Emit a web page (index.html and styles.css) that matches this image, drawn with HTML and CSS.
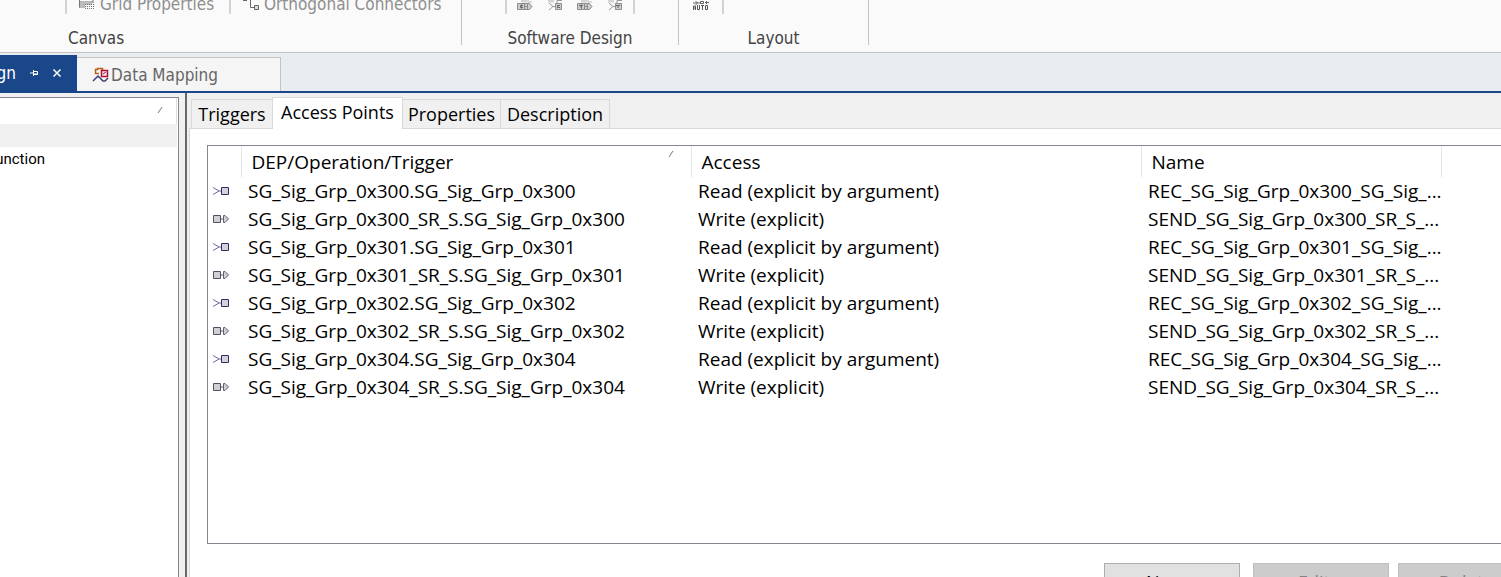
FILE: index.html
```html
<!DOCTYPE html>
<html lang="en">
<head>
<meta charset="utf-8">
<title>Data Mapping</title>
<link rel="stylesheet" href="styles.css">
</head>
<body>
<svg class="defs" aria-hidden="true">
  <symbol id="read" viewBox="0 0 18 12"><path d="M0 2.500 6 6 0 9.500M6 6h2" fill="none" stroke="#6c6c9c"/><path d="M8.500 2.500h7v7h-7z" fill="#d2d2d8" stroke="#303068"/></symbol>
  <symbol id="write" viewBox="0 0 18 12"><path d="M.5 2.500h7v7h-7z" fill="#d0d0d4" stroke="#505064"/><path d="M8 6h2M10.500 2.500v7h1.500L15.500 6 12 2.500z" fill="#d0d0d4" stroke="#606074"/></symbol>
  <symbol id="send" viewBox="0 0 16 12"><path d="M4 1h6" stroke="#d4d4d4" stroke-width="3"/><path d="M11 0v2h4" fill="none" stroke="#bbb"/><path d="M4.500 3.500h6v6h-6zM.5 3.500h7v6h-7zM8 6.500h2M10.500 3.500v6h2l2.500-3-2.500-3z" fill="#ccc" stroke="#8d8d8d"/></symbol>
  <symbol id="receive" viewBox="0 0 16 12"><path d="M1 1h6" stroke="#d4d4d4" stroke-width="3"/><path d="M10 3V.5h5M2 3l4 3.500-4 3.500M6 6.500h2" fill="none" stroke="#999"/><path d="M8.500 3.500h6v6h-6z" fill="#ccc" stroke="#8d8d8d"/></symbol>
  <symbol id="c" viewBox="0 0 16 12"><path d="M6 5.500H3.500v2H6" fill="none" stroke="#666"/></symbol>
  <symbol id="t" viewBox="0 0 16 12"><path d="M2 5.500h4M4 5v3" fill="none" stroke="#666"/></symbol>
</svg>
<header class="ribbon">
  <section class="group canvas">
    <div class="tools">
      <i class="bar"></i>
      <button class="tool grid-tool" disabled><svg width="16" height="12"><path d="M.5 0v7.500H6M0 2h14M14 0v3" fill="#ccc" stroke="#777"/><path d="M1 2h12v3H6v3H1z" fill="#bbb"/><path d="M6 4.500h10M6 6.500h10M6 8.500h10" stroke="#777" stroke-dasharray="1 1"/></svg>Grid Properties</button>
      <i class="bar"></i>
      <button class="tool ortho-tool" disabled><svg width="16" height="12"><path d="M0 .5h4M7.500 0v7.500H12" fill="none" stroke="#666"/><path d="M11.500 5.500h4v4h-4z" fill="#ddd" stroke="#666"/></svg>Orthogonal Connectors</button>
    </div>
    <h2>Canvas</h2>
  </section>
  <section class="group design">
    <div class="tools">
      <i class="bar"></i>
      <button class="tool" aria-label="Send client" disabled><svg width="16" height="12"><use href="#send" width="16" height="12"/><use href="#c" width="16" height="12"/></svg></button>
      <button class="tool" aria-label="Receive client" disabled><svg width="16" height="12"><use href="#receive" width="16" height="12"/><use href="#c" x="7" width="16" height="12"/></svg></button>
      <button class="tool" aria-label="Send trigger" disabled><svg width="16" height="12"><use href="#send" width="16" height="12"/><use href="#t" width="16" height="12"/></svg></button>
      <button class="tool" aria-label="Receive trigger" disabled><svg width="16" height="12"><use href="#receive" width="16" height="12"/><use href="#t" x="7" width="16" height="12"/></svg></button>
      <i class="bar"></i>
    </div>
    <h2>Software Design</h2>
  </section>
  <section class="group layout">
    <div class="tools">
      <button class="tool" aria-label="Auto layout"><svg width="18" height="12"><path d="M1 3h2M3 2h2v2H3M5 3h3M8.500 1.500h3v2h-3zM14.500 1v3M13 2.500h4" fill="none" stroke="#666"/><path d="M1.500 10V6h2v4M1 8h3M5.500 5v4.500h2V5M9 5.500h3M10.500 5v5M13.500 5.500h2v4h-2z" fill="none" stroke="#555"/></svg></button>
      <i class="bar"></i>
    </div>
    <h2>Layout</h2>
  </section>
</header>
<nav class="docs">
  <div class="doc active"><span>gn</span>
    <button aria-label="Pin"><svg width="10" height="10"><path d="M1 5h3M4.500 2v6M4 3.500h4.500v3H4M4 6h5" fill="none" stroke="#fff"/></svg></button>
    <button aria-label="Close"><svg width="10" height="10"><path d="m1.500 1.500 7 7m0-7-7 7" stroke="#fff" stroke-width="1.500"/></svg></button>
  </div>
  <button class="doc mapping"><svg width="17" height="16"><path d="M3.500 7V2.500h2V1.500h5v2M3 6.500h4" fill="none" stroke="#b86414" stroke-width="1.500"/><path d="M9.500 3.500h6v6h-6z" fill="#f4e8ec" stroke="#b01038" stroke-width="1.500"/><path d="M11 7l3-2" stroke="#b01038"/><path d="M1 14l5-5 5 5h2l3-3" fill="none" stroke="#3b3f73" stroke-width="1.500"/></svg>Data Mapping</button>
</nav>
<main class="work">
  <aside class="tree">
    <div class="tree-head"><svg width="6" height="8"><path d="M1 7 5 1" stroke="#777"/></svg></div>
    <div class="tree-row selected"></div>
    <div class="tree-row"><span>unction</span></div>
  </aside>
  <section class="pane">
    <div class="tabs" role="tablist">
      <button role="tab" class="tab triggers">Triggers</button>
      <button role="tab" class="tab current" aria-selected="true">Access Points</button>
      <button role="tab" class="tab props">Properties</button>
      <button role="tab" class="tab desc">Description</button>
    </div>
    <div class="page">
      <div class="list">
        <table>
          <colgroup><col class="c-icon"><col class="c-wide"><col class="c-wide"><col class="c-name"></colgroup>
          <thead><tr><th></th><th><div class="sorted">DEP/Operation/Trigger<svg width="6" height="8"><path d="M1 7 5 1" stroke="#777"/></svg></div></th><th>Access</th><th>Name</th></tr></thead>
          <tbody>
            <tr><td><svg width="18" height="12"><use href="#read"/></svg></td><td>SG_Sig_Grp_0x300.SG_Sig_Grp_0x300</td><td>Read (explicit by argument)</td><td>REC_SG_Sig_Grp_0x300_SG_Sig_...</td></tr>
            <tr><td><svg width="18" height="12"><use href="#write"/></svg></td><td>SG_Sig_Grp_0x300_SR_S.SG_Sig_Grp_0x300</td><td>Write (explicit)</td><td>SEND_SG_Sig_Grp_0x300_SR_S_...</td></tr>
            <tr><td><svg width="18" height="12"><use href="#read"/></svg></td><td>SG_Sig_Grp_0x301.SG_Sig_Grp_0x301</td><td>Read (explicit by argument)</td><td>REC_SG_Sig_Grp_0x301_SG_Sig_...</td></tr>
            <tr><td><svg width="18" height="12"><use href="#write"/></svg></td><td>SG_Sig_Grp_0x301_SR_S.SG_Sig_Grp_0x301</td><td>Write (explicit)</td><td>SEND_SG_Sig_Grp_0x301_SR_S_...</td></tr>
            <tr><td><svg width="18" height="12"><use href="#read"/></svg></td><td>SG_Sig_Grp_0x302.SG_Sig_Grp_0x302</td><td>Read (explicit by argument)</td><td>REC_SG_Sig_Grp_0x302_SG_Sig_...</td></tr>
            <tr><td><svg width="18" height="12"><use href="#write"/></svg></td><td>SG_Sig_Grp_0x302_SR_S.SG_Sig_Grp_0x302</td><td>Write (explicit)</td><td>SEND_SG_Sig_Grp_0x302_SR_S_...</td></tr>
            <tr><td><svg width="18" height="12"><use href="#read"/></svg></td><td>SG_Sig_Grp_0x304.SG_Sig_Grp_0x304</td><td>Read (explicit by argument)</td><td>REC_SG_Sig_Grp_0x304_SG_Sig_...</td></tr>
            <tr><td><svg width="18" height="12"><use href="#write"/></svg></td><td>SG_Sig_Grp_0x304_SR_S.SG_Sig_Grp_0x304</td><td>Write (explicit)</td><td>SEND_SG_Sig_Grp_0x304_SR_S_...</td></tr>
          </tbody>
        </table>
      </div>
      <div class="actions"><button class="new">New...</button><button disabled>Edit...</button><button disabled>Delete</button></div>
    </div>
  </section>
</main>
</body>
</html>
```
FILE: styles.css
```css
* { box-sizing: border-box; }
body { margin: 0; height: 100vh; overflow: hidden; display: flex; flex-direction: column; background: #f0f0f0; color: #000; font: 18px/24px "Open Sans", "Noto Sans", sans-serif; }
button { margin: 0; padding: 0; border: 0; background: none; font: inherit; color: inherit; }
svg { display: block; flex: none; }
.defs { position: absolute; width: 0; height: 0; }

.ribbon { display: flex; flex: none; background: #fafafa; border-bottom: 1px solid #c3c3c3; padding-bottom: 7px; font: 17px/24px "DejaVu Sans Condensed", sans-serif; color: #444; }
.group { border-right: 1px solid #c3c3c3; display: flex; flex-direction: column; }
.group h2 { margin: 0; padding-top: 13px; font: inherit; line-height: 22px; height: 31px; }
.canvas { width: 462px; }
.canvas h2 { padding-left: 68px; }
.design { width: 217px; }
.layout { width: 190px; }
.design h2, .layout h2 { text-align: center; }
.tools { display: flex; height: 14px; }
.canvas .tools { padding-left: 65px; }
.design .tools { padding-left: 43px; }
.layout .tools { padding-left: 13px; }
.bar { width: 2px; background: #d2d2d2; }
.tool { display: flex; align-items: flex-start; height: 14px; color: #8f8f8f; line-height: 8px; white-space: nowrap; }
.grid-tool { width: 162px; padding-left: 12px; gap: 5px; }
.ortho-tool { padding-left: 12px; gap: 5px; }
.design .tool { width: 30px; padding-left: 10px; }
.design .tool + .bar { margin-left: 6px; }
.layout .tool { width: 30px; padding-left: 0; }

.docs { display: flex; align-items: flex-end; flex: none; height: 40px; background: #e8ebf0; border-bottom: 2px solid #1a478a; font: 17px/24px "DejaVu Sans Condensed", sans-serif; }
.doc { display: flex; align-items: center; }
.doc.active { width: 77px; height: 36px; background: #1a478a; color: #fff; gap: 13px; overflow: hidden; }
.doc.active span { width: 16px; display: flex; justify-content: flex-end; }
.mapping { width: 204px; height: 34px; padding-left: 15px; gap: 2px; background: #f5f5f5; border: 1px solid #c3c3c3; border-width: 1px 1px 0 0; color: #666; }

.work { display: flex; flex: 1; min-height: 0; }
.tree { width: 179px; flex: none; margin-top: 4px; background: #fff; border: 1px solid #828790; border-width: 1px 1px 0 0; padding-right: 1px; font-family: Roboto, sans-serif; font-size: 15px; }
.tree-head { height: 26px; border-right: 1px solid #ddd; padding: 8px 13px; display: flex; justify-content: flex-end; }
.tree-row { height: 23px; display: flex; align-items: center; }
.tree-row span { width: 45px; display: flex; justify-content: flex-end; }
.tree-row.selected { background: #f0f0f0; }
.pane { flex: 1; min-width: 0; margin-left: 6px; border-left: 2px solid #696969; padding-left: 2px; display: flex; flex-direction: column; }
.tabs { display: flex; align-items: flex-end; height: 36px; padding: 0 2px; box-shadow: inset 0 -1px #d9d9d9; }
.tab { height: 30px; background: #f0f0f0; border: 1px solid #d9d9d9; white-space: nowrap; }
.triggers { width: 81px; border-right: 0; }
.current { width: 131px; height: 32px; background: #fff; border-bottom: 0; padding-bottom: 4px; }
.props { width: 98px; border-left: 0; }
.desc { width: 109px; border-left: 0; }
.page { flex: 1; background: #fff; border-left: 1px solid #d9d9d9; padding: 16px 0 0 17px; overflow: hidden; }
.list { height: 399px; border: 1px solid #828790; border-right: 0; overflow: hidden; font-size: 19px; }
table { border-collapse: collapse; table-layout: fixed; width: 1233px; }
.c-icon { width: 33px; }
.c-wide { width: 450px; }
.c-name { width: 300px; }
th { height: 31px; padding: 1px 0 0 10px; font-weight: 400; text-align: left; border-right: 1px solid #e5e5e5; }
.sorted { display: flex; justify-content: space-between; padding-right: 17px; }
td { height: 28px; padding: 0 0 0 7px; white-space: nowrap; }
td:first-child { padding-left: 5px; }
.actions { display: flex; justify-content: flex-end; gap: 13px; margin: 19px -33px 0 0; }
.actions button { width: 136px; height: 37px; flex: none; border: 1px solid #bfbfbf; background: #ccc; color: #838383; }
.actions .new { background: #e1e1e1; border-color: #adadad; color: #000; }
.actions button:last-child { margin-left: -4px; }
```
